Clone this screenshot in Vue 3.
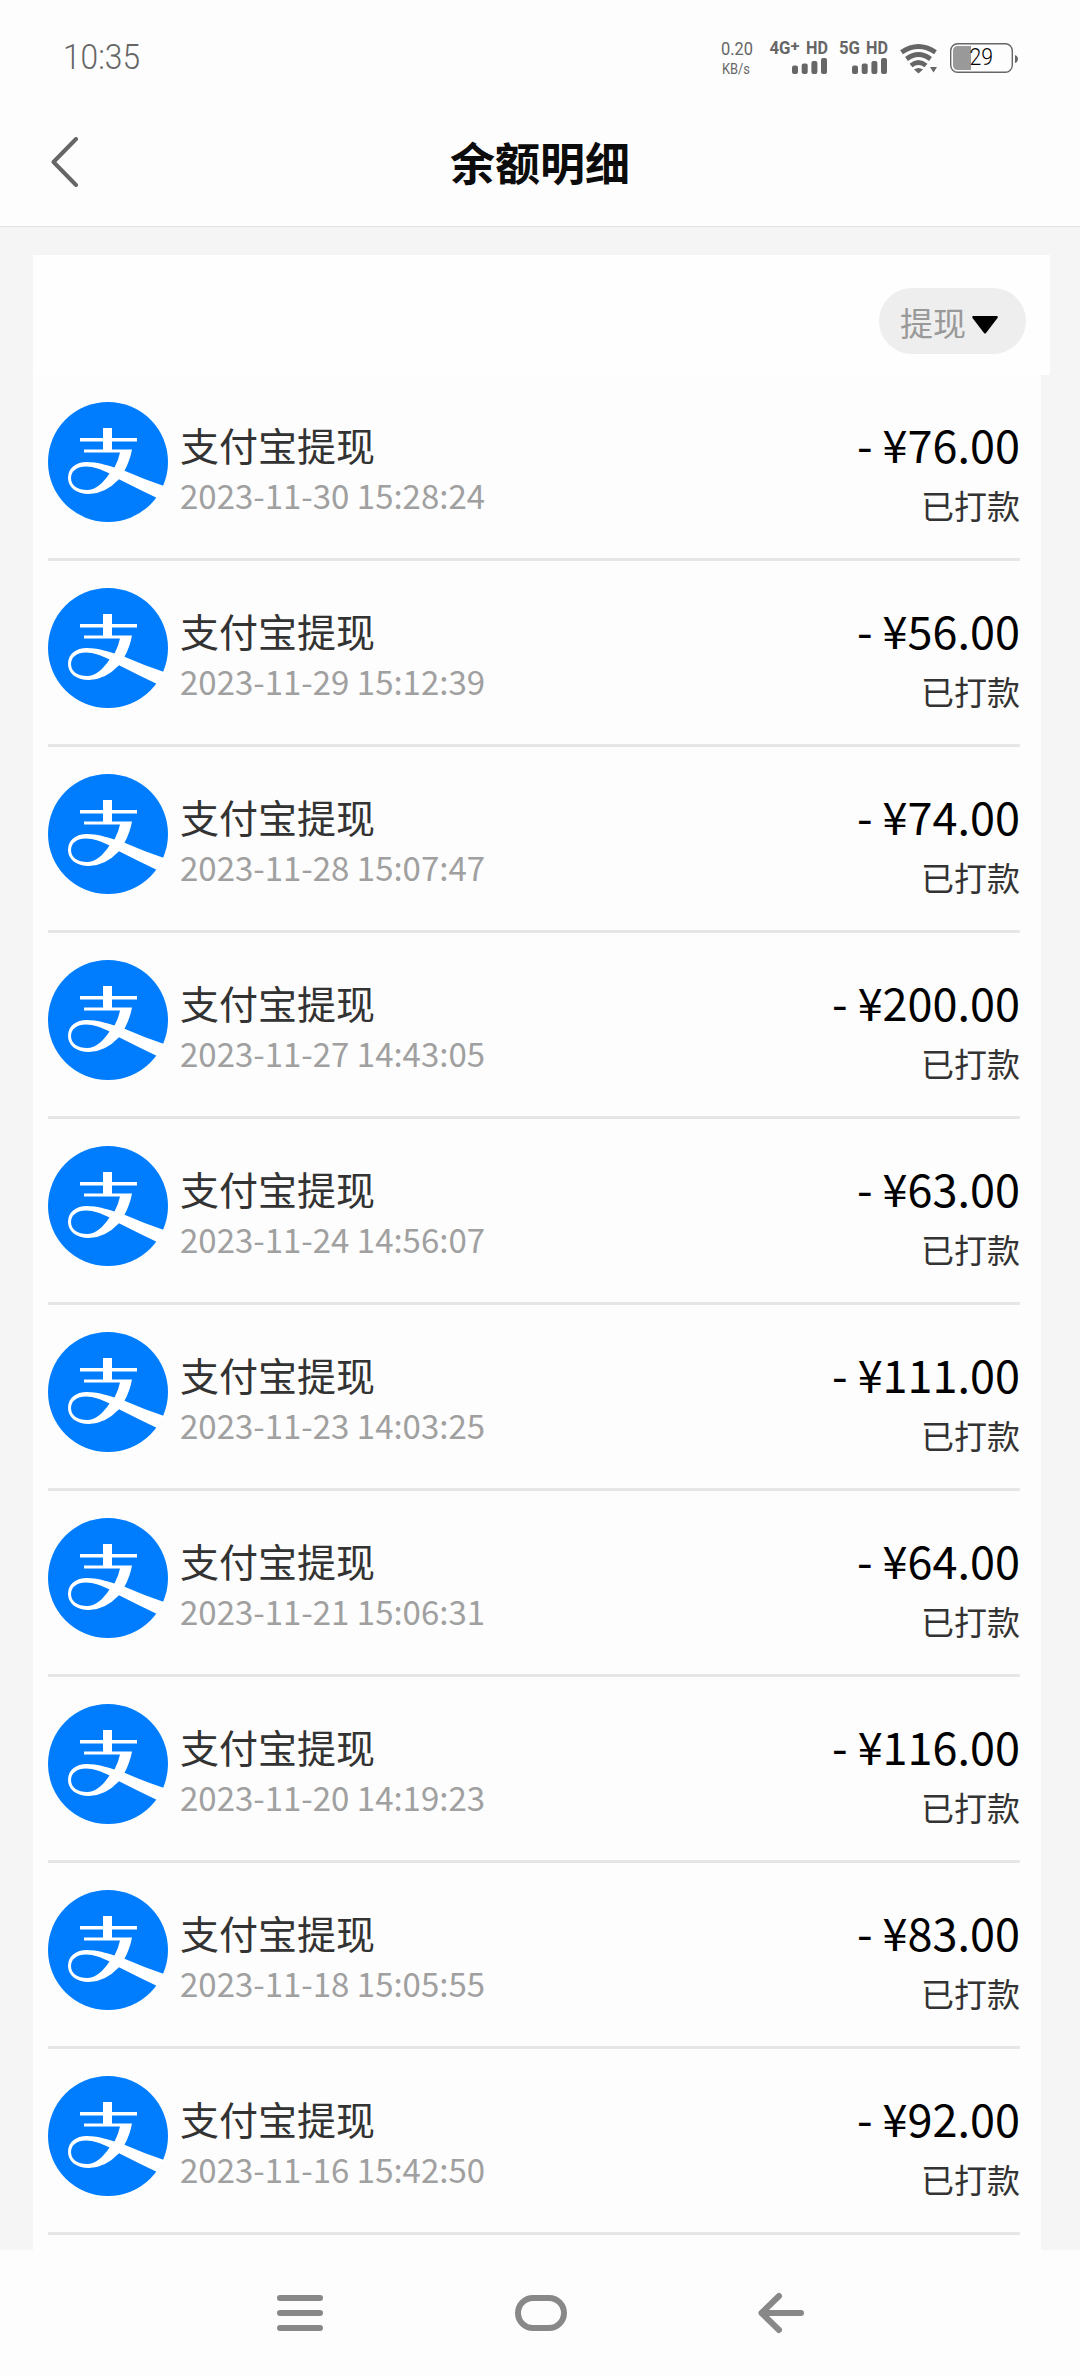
<script setup>
const records = [
  { time: '2023-11-30 15:28:24', amount: '76.00' },
  { time: '2023-11-29 15:12:39', amount: '56.00' },
  { time: '2023-11-28 15:07:47', amount: '74.00' },
  { time: '2023-11-27 14:43:05', amount: '200.00' },
  { time: '2023-11-24 14:56:07', amount: '63.00' },
  { time: '2023-11-23 14:03:25', amount: '111.00' },
  { time: '2023-11-21 15:06:31', amount: '64.00' },
  { time: '2023-11-20 14:19:23', amount: '116.00' },
  { time: '2023-11-18 15:05:55', amount: '83.00' },
  { time: '2023-11-16 15:42:50', amount: '92.00' },
]
</script>

<template>
  <div class="screen">
    <div class="status-bar">
      <svg width="1080" height="100" viewBox="0 0 1080 100">
        <g class="thin" fill="#666">
          <text x="63" y="68.5" font-size="35.5" font-weight="300" textLength="77" lengthAdjust="spacingAndGlyphs">10:35</text>
          <text x="721" y="55" font-size="17.5" textLength="32" lengthAdjust="spacingAndGlyphs">0.20</text>
          <text x="722" y="74" font-size="15" textLength="28" lengthAdjust="spacingAndGlyphs">KB/s</text>
        </g>
        <g class="thin" fill="#666" font-weight="700" font-size="17.5">
          <text x="769.5" y="54" textLength="21" lengthAdjust="spacingAndGlyphs">4G</text>
          <text x="790.5" y="51" font-size="15" textLength="9" lengthAdjust="spacingAndGlyphs">+</text>
          <text x="806" y="54" textLength="22" lengthAdjust="spacingAndGlyphs">HD</text>
          <text x="839" y="54" textLength="21" lengthAdjust="spacingAndGlyphs">5G</text>
          <text x="866" y="54" textLength="22" lengthAdjust="spacingAndGlyphs">HD</text>
        </g>
        <g v-for="x in [792, 852]" :key="x" fill="#666">
          <rect :x="x" y="65.5" width="6" height="8.5" rx="2" />
          <rect :x="x + 9.7" y="63.5" width="6" height="10.5" rx="2" />
          <rect :x="x + 19.4" y="61" width="6" height="13" rx="2" />
          <rect :x="x + 29" y="58" width="6" height="16" rx="2" />
        </g>
        <g fill="none" stroke="#666" stroke-width="4.8">
          <path d="M901.500 52.200 Q918.500 40.800 935.500 52.200" />
          <path d="M906.500 59 Q918.500 50 930.500 59" />
          <path d="M911 65.500 Q918.500 59.500 926 65.500" />
        </g>
        <path d="M914 69.500 Q918.500 66.500 923 69.500 L918.500 73.500Z M930 67h7l-3.500 5.500z" fill="#666" />
        <rect x="950.700" y="43.700" width="61.600" height="28.600" rx="7" fill="none" stroke="#666" stroke-width="1.400" />
        <path d="M971 46h-13q-5 0-5 5v14q0 5 5 5h13z" fill="#999" />
        <path d="M1015 55q3 1 3 4t-3 4z" fill="#666" />
        <text class="thin" x="969.500" y="64.500" font-size="23" font-weight="300" fill="#000" textLength="23.500" lengthAdjust="spacingAndGlyphs">29</text>
      </svg>
    </div>

    <header class="title-bar">
      <svg class="back" width="28" height="50" viewBox="0 0 28 50">
        <path d="M25 2 2.500 25 25 48" fill="none" stroke="#666" stroke-width="4" stroke-linecap="round" stroke-linejoin="round" />
      </svg>
      <h1>余额明细</h1>
    </header>

    <main class="content">
      <div class="filter-bar">
        <button class="filter" type="button">
          <span>提现</span>
          <svg width="28" height="20" viewBox="0 0 28 20">
            <path d="M2 1h24q1.500 0.500 0.500 2L15 18q-1 1-2 0L1.500 3Q0.500 1.500 2 1z" />
          </svg>
        </button>
      </div>

      <ul class="records">
        <li v-for="r in records" :key="r.time" class="record">
          <svg class="logo" width="120" height="120" viewBox="0 0 120 120">
            <circle cx="60" cy="60" r="60" fill="#007dff" />
            <g fill="#fff">
              <path d="M55 26h9v10h25v3.500H64v8h20q-2 11-7.500 21.300Q95 77 116 84L109 96Q90 87 71 77.300Q57 92 41 92C28 92 20 85 20 76C20 66 28 60 39 60C49 60 58 63 66.500 65.500Q70.500 58 72 50.600H36V47.500h19v-8H32V36h23z" />
            </g>
            <path d="M61.500 71.500C53 67.500 46 64.500 38 64.500C29 64.500 23 69 23 76C23 84 30 88 39 88C48 88 55 81 61.500 71.500z" fill="#007dff" />
          </svg>
          <div class="info">
            <div class="name">支付宝提现</div>
            <div class="time">{{ r.time }}</div>
          </div>
          <div class="result">
            <div class="amount">- ¥{{ r.amount }}</div>
            <div class="state">已打款</div>
          </div>
        </li>
      </ul>
    </main>

    <nav class="nav-bar">
      <svg width="46" height="42" viewBox="0 0 46 42">
        <path d="M3 6h40M3 21h40M3 36h40" />
      </svg>
      <svg width="52" height="42" viewBox="0 0 52 42">
        <rect x="3" y="6" width="46" height="30" rx="15" />
      </svg>
      <svg width="46" height="42" viewBox="0 0 46 42">
        <path d="M21 4 3.500 21 21 38M3.500 21H43" />
      </svg>
    </nav>
  </div>
</template>

<style>
body {
  margin: 0;
}
</style>

<style scoped>
.screen {
  width: 1080px;
  height: 2376px;
  display: flex;
  flex-direction: column;
  overflow: hidden;
  background: #fdfdfd;
  font-family: "Noto Sans CJK SC", sans-serif;
}
.status-bar {
  height: 100px;
}
.status-bar svg {
  display: block;
}
.thin {
  font-family: Roboto, sans-serif;
}
.title-bar {
  height: 126px;
  border-bottom: 1px solid #e2e2e2;
  display: grid;
  grid-template-columns: 1fr auto 1fr;
  align-items: center;
}
.back {
  margin-left: 51px;
  margin-top: -2px;
}
h1 {
  margin: -2px 0 0;
  font-size: 45px;
  line-height: 66px;
  font-weight: 700;
  color: #0c0c0c;
}
.content {
  height: 1995px;
  padding: 28px 30px 0 33px;
  background: #f5f5f5;
  overflow: hidden;
}
.filter-bar {
  height: 120px;
  box-sizing: border-box;
  padding: 33px 24px 0 0;
  display: flex;
  justify-content: flex-end;
  background: #fefefe;
}
.filter {
  width: 147px;
  height: 66px;
  padding: 2px 0 0 21px;
  border: 0;
  border-radius: 33px;
  background: #eee;
  display: flex;
  align-items: center;
  gap: 5px;
  font: 400 33px/64px "Noto Sans CJK SC", sans-serif;
  color: #999;
}
.filter svg {
  margin-top: 5px;
  fill: #000;
}
.records {
  list-style: none;
  margin: 0 9px 0 0;
  padding: 0 21px 0 15px;
  height: 1900px;
  background: #fdfdfd;
}
.record {
  box-sizing: border-box;
  height: 186px;
  padding-top: 27px;
  border-bottom: 3px solid #e6e6e6;
  display: flex;
}
.info {
  margin-left: 12px;
  padding-top: 16px;
  flex: 1;
}
.name {
  font-size: 39px;
  line-height: 52px;
  color: #333;
}
.time {
  font-size: 33px;
  line-height: 48px;
  margin-top: 1px;
  color: #a0a0a0;
}
.result {
  text-align: right;
  padding-top: 9px;
}
.amount {
  font-size: 45px;
  line-height: 66px;
  color: #000;
}
.state {
  font-size: 33px;
  line-height: 48px;
  margin-top: 4px;
  color: #333;
}
.nav-bar {
  flex: 1;
  padding: 42px 276px 0 277px;
  display: flex;
  justify-content: space-between;
  align-items: flex-start;
}
.nav-bar svg {
  fill: none;
  stroke: #888;
  stroke-width: 6;
  stroke-linecap: round;
  stroke-linejoin: round;
}
</style>
